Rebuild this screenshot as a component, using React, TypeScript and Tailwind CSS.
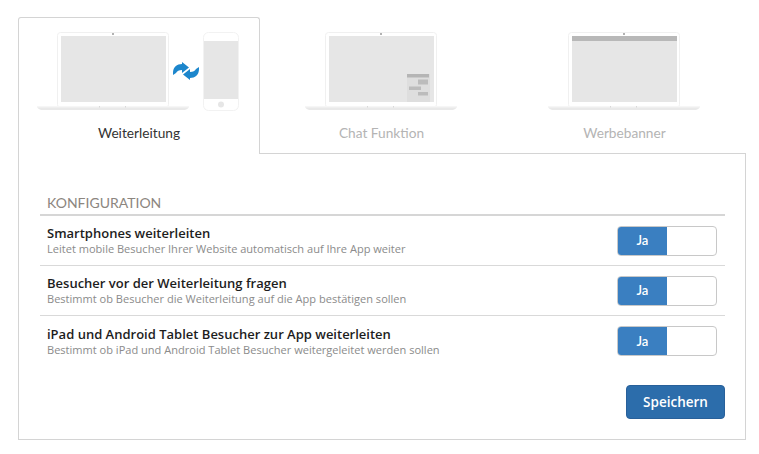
const openSans = 'font-["Open_Sans",sans-serif]'

function Laptop({ children }: { children?: React.ReactNode }) {
  return (
    <g>
      <rect x="20.5" y="0.5" width="111" height="75" rx="3" fill="#fff" stroke="#f0f0f0" />
      <rect x="24" y="4" width="105" height="66" fill="#e6e6e6" />
      <circle cx="76" cy="2" r="1" fill="#999" />
      {children}
      <path d="M0 74h152c0 2-2 4-6 4H6c-4 0-6-2-6-4z" fill="#e9e9e9" />
      <path d="M0 74h152v1.500H0z" fill="#f6f6f6" />
      <path d="M62 74h1v1.500h-1zM88 74h1v1.500h-1z" fill="#d8d8d8" />
    </g>
  )
}

function Tab({ label, active, children }: { label: string; active?: boolean; children: React.ReactNode }) {
  return (
    <div
      className={
        active
          ? 'relative z-10 -mb-px flex h-[137px] w-[242px] flex-col items-center rounded-t-[3px] border border-b-0 border-[#d4d4d4] bg-white'
          : 'flex h-[136px] flex-1 flex-col items-center border border-transparent pr-0.5'
      }
    >
      <div className={active ? 'mt-[14px] h-[80px] w-[203px] -translate-x-px' : 'mt-[14px] h-[80px] w-[152px]'}>{children}</div>
      <span className={active ? 'mt-[11px] text-[13.7px] leading-[20px] text-[#333]' : 'mt-[11px] translate-x-px text-[13.7px] leading-[20px] text-[#b4b4b4]'}>
        {label}
      </span>
    </div>
  )
}

function Row({ title, text, last }: { title: string; text: string; last?: boolean }) {
  return (
    <div className={last ? 'flex h-[50px] items-center justify-between pl-[7px] pr-2' : 'flex h-[50px] items-center justify-between border-b border-[#d9d9d9] pl-[7px] pr-2'}>
      <div className={openSans}>
        <div className="text-[13px] font-semibold leading-[17px] text-[#1d1d1d]">{title}</div>
        <div className="text-[11.05px] leading-[14px] text-[#8b8b8b]">{text}</div>
      </div>
      <div className="flex h-[30px] w-[100px] overflow-hidden rounded-[4px] border border-[#c8c8c8] bg-white">
        <div className="flex w-[49px] items-center justify-center bg-[#3a7fc1] pt-px text-[13px] font-semibold text-white">Ja</div>
      </div>
    </div>
  )
}

export default function App() {
  return (
    <div className='h-[454px] w-[759px] bg-white pl-[18px] pt-[17px] font-["Lato",sans-serif]'>
      <div className="w-[728px]">
        <div className="flex">
          <Tab label="Weiterleitung" active>
            <svg width="203" height="80" viewBox="0 0 203 80">
              <Laptop />
              <rect x="166.500" y="0.500" width="35" height="78" rx="5" fill="#fff" stroke="#f2f2f2" />
              <rect x="167" y="9" width="34" height="58" fill="#e6e6e6" />
              <circle cx="184" cy="72.500" r="3" fill="#e6e6e6" />
              <path d="M136 41c0-6 4-9 9-9v-2l7 5.500-7 5.500v-3c-3 0-5 1-6 3-1 1-2 1-3 2z" fill="#1c86cc" />
              <path d="M162 37c0 6-4 9-9 9v2l-7-5.500 7-5.500v3c3 0 5-1 6-3 1-1 2-1 3-2z" fill="#1c86cc" />
            </svg>
          </Tab>
          <Tab label="Chat Funktion">
            <svg width="152" height="80" viewBox="0 0 152 80">
              <Laptop>
                <rect x="102" y="42" width="23" height="28" fill="#dedede" />
                <rect x="102" y="42" width="22" height="3.500" fill="#b5b5b5" />
                <rect x="113" y="47.500" width="10" height="5" fill="#bcbcbc" />
                <rect x="104" y="54.500" width="12" height="3.500" fill="#bcbcbc" />
                <rect x="113" y="60" width="10" height="3.500" fill="#bcbcbc" />
              </Laptop>
            </svg>
          </Tab>
          <Tab label="Werbebanner">
            <svg width="152" height="80" viewBox="0 0 152 80">
              <Laptop>
                <rect x="24" y="4" width="105" height="5" fill="#b8b8b8" />
              </Laptop>
            </svg>
          </Tab>
        </div>
        <div className="h-[287px] border border-[#d4d4d4] bg-white pl-[21px] pr-5 pt-[39px]">
          <div className="border-b-2 border-[#d6d6d6] pb-px pl-[7px] text-[14px] leading-[20px] text-[#8c8680]">KONFIGURATION</div>
          <Row title="Smartphones weiterleiten" text="Leitet mobile Besucher Ihrer Website automatisch auf Ihre App weiter" />
          <Row title="Besucher vor der Weiterleitung fragen" text="Bestimmt ob Besucher die Weiterleitung auf die App bestätigen sollen" />
          <Row title="iPad und Android Tablet Besucher zur App weiterleiten" text="Bestimmt ob iPad und Android Tablet Besucher weitergeleitet werden sollen" last />
          <div className="mt-[19px] flex justify-end">
            <button className={`h-[34px] w-[99px] rounded-[4px] border border-[#28609a] bg-[#2c6dab] text-[13.5px] font-semibold text-white ${openSans}`}>
              Speichern
            </button>
          </div>
        </div>
      </div>
    </div>
  )
}
